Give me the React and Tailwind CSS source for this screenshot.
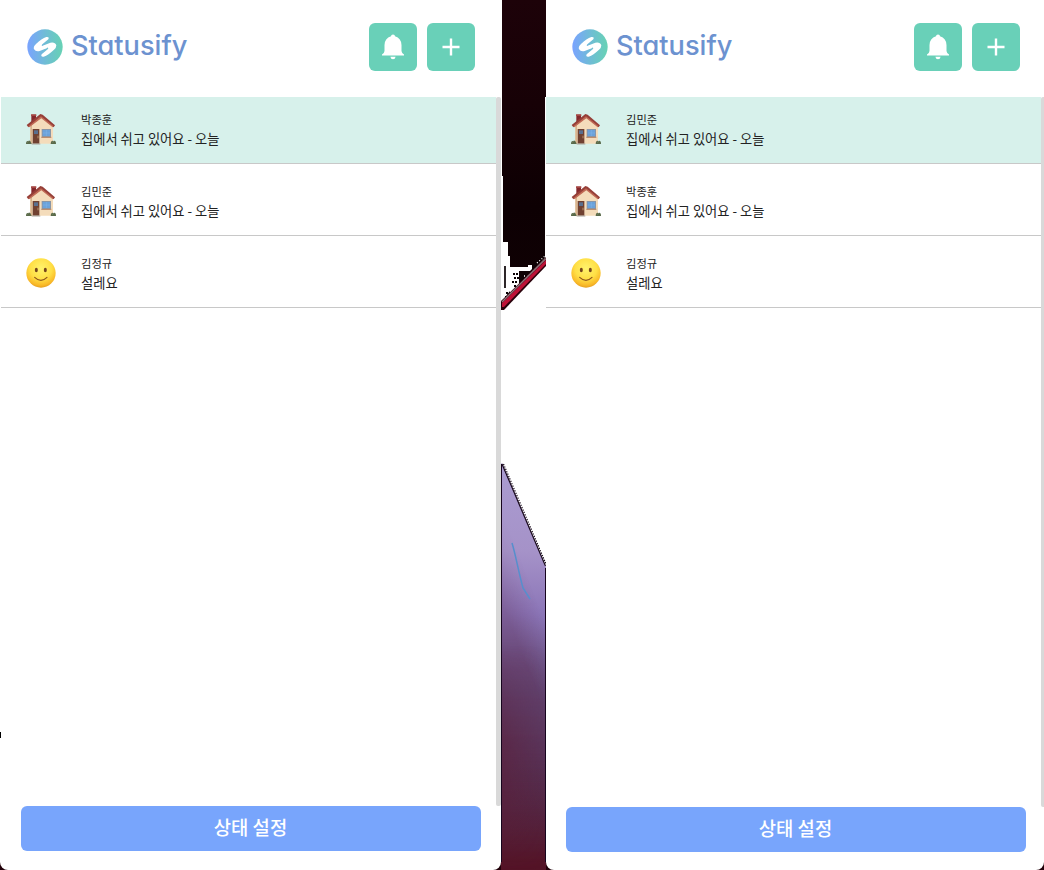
import React from "react";

function Logo({ id }) {
  return (
    <svg className="size-9 shrink-0" viewBox="0 0 108 108">
      <defs>
        <linearGradient id={id} x1="0" x2="1" y1="0" y2="0">
          <stop offset="0" stopColor="#7aa3ff" />
          <stop offset="0.5" stopColor="#6fbcd6" />
          <stop offset="1" stopColor="#67d2b4" />
        </linearGradient>
      </defs>
      <circle cx="54" cy="54" r="53" fill={`url(#${id})`} />
      <g fill="#fff">
        <path d="M58 24Q68 23 64 31L46 46Q41 52 49 51L57 48L61 57L38 66Q24 69 20 58Q20 50 27 45Q44 29 58 24Z" />
        <path
          transform="rotate(180 54 53.5)"
          d="M58 24Q68 23 64 31L46 46Q41 52 49 51L57 48L61 57L38 66Q24 69 20 58Q20 50 27 45Q44 29 58 24Z"
        />
      </g>
    </svg>
  );
}

function House() {
  return (
    <svg className="h-[32px] w-[31px]" viewBox="0 0 90 92">
      <path d="M16 3H30V28H16Z" fill="#84272b" />
      <path d="M15 2H31V7H15Z" fill="#a64743" />
      <path d="M13 34L45 7L81 37V90H13Z" fill="#f4dcbb" />
      <path d="M13 34L18 30V90H13Z" fill="#d9b48e" />
      <path d="M2 34L43 1L50 3L87 35L83 41L46 11L7 41Z" fill="#963f38" />
      <path d="M7 38L45 8L82 37L80 41L46 14L10 41Z" fill="#c06a55" />
      <path d="M20 46H40V90H20Z" fill="#704131" />
      <path d="M24 50H36V61H24Z" fill="#596f8f" />
      <path d="M36 66V74" stroke="#e2b883" strokeWidth="2" />
      <path d="M47 46H75V71H47Z" fill="#8996a6" />
      <path d="M50 49H72V67H50Z" fill="#6ba2da" />
      <path d="M61 49V67M50 58H72" stroke="#8cbef0" strokeWidth="1" />
      <path d="M46 71H76" stroke="#b78462" strokeWidth="3" />
      <path d="M17 91H43" stroke="#a8a49c" strokeWidth="3" />
      <path d="M0 91Q0 80 7 82Q12 77 17 91ZM74 91Q75 79 82 82Q90 79 90 91Z" fill="#596a4a" />
      <path d="M4 86L8 83M79 86L84 83" stroke="#8b9575" strokeWidth="2" />
    </svg>
  );
}

function Smile({ id }) {
  return (
    <svg className="size-[30px]" viewBox="0 0 90 90">
      <defs>
        <radialGradient id={id} cx="0.5" cy="0.34" r="0.68">
          <stop offset="0" stopColor="#fff36d" />
          <stop offset="0.55" stopColor="#ffdf45" />
          <stop offset="0.85" stopColor="#f9b928" />
          <stop offset="1" stopColor="#e19a20" />
        </radialGradient>
      </defs>
      <circle cx="45" cy="45" r="44" fill={`url(#${id})`} />
      <ellipse cx="31" cy="36" rx="4.5" ry="7" fill="#75451c" />
      <ellipse cx="58" cy="36" rx="4.5" ry="7" fill="#75451c" />
      <path d="M26 58Q45 76 63 58" stroke="#8d561d" strokeWidth="3.5" strokeLinecap="round" fill="none" />
    </svg>
  );
}

function HeaderButton({ children }) {
  return (
    <button className="flex size-12 items-center justify-center rounded-md bg-[#69d0b8]">
      {children}
    </button>
  );
}

function StatusRow({ name, status, icon, active }) {
  return (
    <li
      className={
        "flex h-[72px] items-center border-b border-[#c8c8c8] pl-[25px] " +
        (active ? "bg-[#d7f1eb]" : "bg-white")
      }
    >
      <div className="flex w-[30px] shrink-0 justify-center pt-[3px]">{icon}</div>
      <div className="pt-[3px] pl-[25px] text-[#222]">
        <p className="text-[11.3px] leading-[19px]">{name}</p>
        <p className="text-[13.25px] leading-[20px]">{status}</p>
      </div>
    </li>
  );
}

function Panel({ id, names, buttonClass }) {
  return (
    <div className="flex h-full w-[500px] shrink-0 flex-col">
      <header className="flex h-[97px] shrink-0 items-start justify-between px-[26px]">
        <div className="flex pt-[29px]">
          <Logo id={`${id}-logo`} />
          <h1 className="pl-2 font-[Inter,sans-serif] text-[27.2px] leading-[33px] font-medium text-[#6c92d0] [font-feature-settings:'cv11','ss03']">
            Statusify
          </h1>
        </div>
        <div className="flex gap-2.5 pt-[23px]">
          <HeaderButton>
            <svg className="h-[26px] w-[22px]" viewBox="0 0 22 26" fill="#fff">
              <path d="M9 2.2Q9 .5 11 .5T13 2.2Q19.3 4.1 19.5 11V17Q19.7 19.2 22 20.5V21.5H0V20.5Q2.3 19.2 2.5 17V11Q2.7 4.1 9 2.2ZM8.4 22.7H13.6Q13.2 25.2 11 25.2T8.4 22.7Z" />
            </svg>
          </HeaderButton>
          <HeaderButton>
            <svg className="size-[18px]" viewBox="0 0 18 18">
              <path d="M9 .5V17.5M.5 9H17.5" stroke="#fff" strokeWidth="2.4" />
            </svg>
          </HeaderButton>
        </div>
      </header>
      <div className="flex min-h-0 grow overflow-hidden">
        <ul className="-mt-[5px] w-[495px]">
          <StatusRow active name={names[0]} status="집에서 쉬고 있어요 - 오늘" icon={<House />} />
          <StatusRow name={names[1]} status="집에서 쉬고 있어요 - 오늘" icon={<House />} />
          <StatusRow name="김정규" status="설레요" icon={<Smile id={`${id}-smile`} />} />
        </ul>
        <div className="w-[5px] rounded-[2px] bg-[#d9d9d9]" />
      </div>
      <footer className={"shrink-0 px-5 " + buttonClass}>
        <button className="flex h-[45px] w-full items-center justify-center rounded-md bg-[#78a5fc] pr-px pb-[3px] text-[18.8px] leading-none font-medium text-white">
          상태 설정
        </button>
      </footer>
    </div>
  );
}

function Wallpaper() {
  return (
    <svg className="h-full w-[45px] shrink-0" viewBox="501 0 45 870">
      <defs>
        <linearGradient id="dark" x1="0" x2="0" y1="0" y2="1">
          <stop offset="0" stopColor="#1d0209" />
          <stop offset="0.35" stopColor="#170106" />
          <stop offset="0.7" stopColor="#0d0003" />
          <stop offset="1" stopColor="#100204" />
        </linearGradient>
        <linearGradient id="violet" gradientUnits="userSpaceOnUse" x1="536" y1="475" x2="520" y2="862">
          <stop offset="0" stopColor="#aa9bd0" />
          <stop offset="0.2" stopColor="#a592c8" />
          <stop offset="0.36" stopColor="#8b75b7" />
          <stop offset="0.56" stopColor="#65507f" />
          <stop offset="0.78" stopColor="#532f4e" />
          <stop offset="1" stopColor="#541427" />
        </linearGradient>
        <linearGradient id="edge" gradientUnits="userSpaceOnUse" x1="501" y1="600" x2="532" y2="588">
          <stop offset="0" stopColor="#5b2a50" stopOpacity="0.55" />
          <stop offset="1" stopColor="#5b2a50" stopOpacity="0" />
        </linearGradient>
        <linearGradient id="fade" x1="0" x2="0" y1="0" y2="1">
          <stop offset="0.1" stopColor="#fff" stopOpacity="0" />
          <stop offset="0.5" stopColor="#fff" stopOpacity="0.8" />
          <stop offset="0.7" stopColor="#fff" stopOpacity="0.7" />
          <stop offset="1" stopColor="#fff" stopOpacity="0" />
        </linearGradient>
        <mask id="edge-mask">
          <rect x="501" y="464" width="45" height="406" fill="url(#fade)" />
        </mask>
        <linearGradient id="edge-low" x1="0" x2="1" y1="0" y2="0">
          <stop offset="0" stopColor="#5b1c35" stopOpacity="0.6" />
          <stop offset="1" stopColor="#5b1c35" stopOpacity="0" />
        </linearGradient>
        <mask id="low-mask">
          <rect x="501" y="620" width="45" height="250" fill="url(#fade)" />
        </mask>
      </defs>
      <rect x="501" y="0" width="45" height="862" fill="#fff" />
      <path fill="url(#dark)" d="M502 0H546V97H545V258L510 294L506 296L510 291H512V288L518 284V277H512V267H510V256H508V242H503V176H502Z" />
      <path d="M512 267H528V265H532V269L530 271H512Z" fill="#fff" />
      <path d="M512 271H519V285L510 294V284H512Z" fill="#fff" />
      <path d="M505 266V288" stroke="#090003" strokeWidth="1.7" fill="none" />
      <path d="M513 274H519M514 278H520M512 282H518M514 286H517M506 293H512M505 297H509" stroke="#090003" strokeWidth="2" strokeDasharray="2 1" fill="none" />
      <path d="M524 276H528M537 263L545 256M504 302L536 268" stroke="#fff" strokeWidth="1.3" strokeDasharray="1 2" fill="none" />
      <path d="M501 301L546 257V266L504 310H501Z" fill="#29020b" />
      <path d="M502 303L546 260V264L504 307H502Z" fill="#be1237" />
      <path d="M502 302L546 258.5" stroke="#92737a" strokeWidth="1.4" />
      <path d="M501 464L502 463L546 567V870H501Z" fill="url(#violet)" />
      <path d="M501 464L502 463L546 567V870H501Z" fill="url(#edge)" mask="url(#edge-mask)" />
      <rect x="501" y="620" width="45" height="250" fill="url(#edge-low)" mask="url(#low-mask)" />
      <path d="M512 543C516 556 518 570 523 588L530 599" stroke="#568fcd" strokeWidth="1.5" fill="none" />
      <path d="M501.5 464V862M545.5 568V862" stroke="#17051e" strokeWidth="1" />
      <path d="M502 464L545.5 566" stroke="#160719" strokeWidth="1.2" fill="none" />
      <path d="M503.5 464L546 564" stroke="#160719" strokeWidth="1.2" strokeDasharray="1.3 1.3" fill="none" />
    </svg>
  );
}

export default function App() {
  return (
    <div className="relative flex h-[870px] w-[1044px] overflow-hidden bg-[#210009] font-['Noto_Sans_CJK_KR',sans-serif]">
      <div className="h-full w-[501px] shrink-0 rounded-b-[8px] bg-white pl-px">
        <Panel id="left" names={["박종훈", "김민준"]} buttonClass="pb-[19px]" />
      </div>
      <Wallpaper />
      <div className="h-full w-[498px] shrink-0 overflow-hidden rounded-b-[8px] bg-white">
        <Panel id="right" names={["김민준", "박종훈"]} buttonClass="pb-[18px]" />
      </div>
      <div className="absolute top-[732px] left-0 h-1.5 w-px bg-black" />
    </div>
  );
}
